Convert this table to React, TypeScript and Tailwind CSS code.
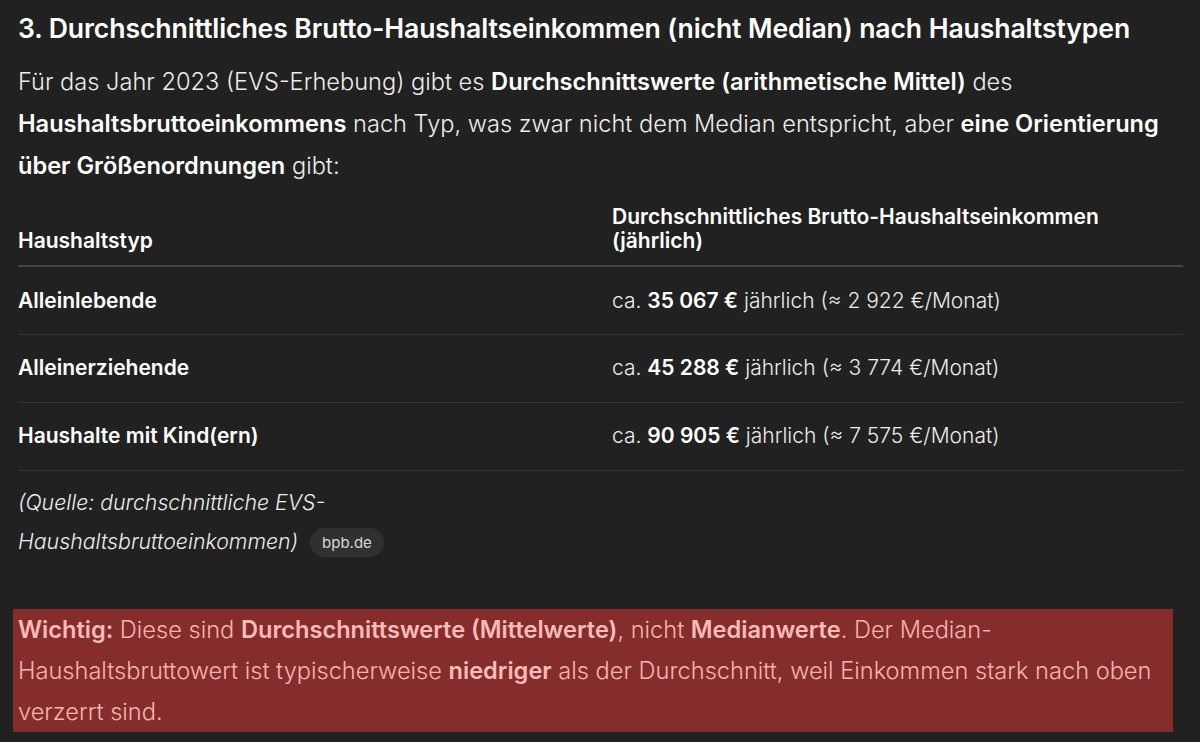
import React from "react";

const rows = [
  { t: "Alleinlebende", v: "35 067 €", m: "2 922" },
  { t: "Alleinerziehende", v: "45 288 €", m: "3 774" },
  { t: "Haushalte mit Kind(ern)", v: "90 905 €", m: "7 575" },
];

export default function App() {
  return (
    <div
      className="min-h-[742px] w-[1200px] bg-[#212121] text-[#ececec] overflow-hidden"
      style={{ fontFamily: "Inter, 'Noto Sans', sans-serif" }}
    >
      <div className="pl-[18px] pr-[17px] pt-[11px]">
        <h3 className="text-[26.6px] leading-[34px] font-semibold text-white tracking-[-0.1px]">
          3. Durchschnittliches Brutto-Haushaltseinkommen (nicht Median) nach Haushaltstypen
        </h3>
        <p className="mt-[16px] text-[23.6px] leading-[42px] font-light text-[#ececec]">
          Für das Jahr 2023 (EVS-Erhebung) gibt es{" "}
          <strong className="font-semibold text-white">Durchschnittswerte (arithmetische Mittel)</strong> des{" "}
          <strong className="font-semibold text-white">Haushaltsbruttoeinkommens</strong> nach Typ, was zwar nicht dem
          Median entspricht, aber <strong className="font-semibold text-white">eine Orientierung über Größenordnungen</strong>{" "}
          gibt:
        </p>

        <table className="mt-[18px] w-[1165px] border-collapse text-[21px]">
          <thead>
            <tr className="border-b-2 border-[#454545]">
              <th className="w-[594px] pb-[12px] text-left align-bottom font-semibold leading-[24px] text-white">
                Haushaltstyp
              </th>
              <th className="pb-[12px] text-left align-bottom font-semibold leading-[24px] text-white">
                Durchschnittliches Brutto-Haushaltseinkommen
                <br />
                (jährlich)
              </th>
            </tr>
          </thead>
          <tbody>
            {rows.map((r) => (
              <tr key={r.t} className="h-[68px] border-b border-[#353535]">
                <td className="align-middle font-semibold text-white">{r.t}</td>
                <td className="align-middle font-light text-[#ececec]">
                  ca. <strong className="font-semibold text-white">{r.v}</strong> jährlich (≈ {r.m} €/Monat)
                </td>
              </tr>
            ))}
          </tbody>
        </table>

        <p className="mt-[12px] text-[21.3px] leading-[39px] italic font-light text-[#ececec]">
          (Quelle: durchschnittliche EVS-
          <br />
          Haushaltsbruttoeinkommen){" "}
          <span className="ml-[6px] inline-flex h-[29px] items-center rounded-full bg-[#303030] px-[12px] align-middle text-[15px] not-italic font-normal leading-none text-[#d8d8d8]">
            bpb.de
          </span>
        </p>
      </div>

      <div className="ml-[13px] mt-[48px] w-[1160px] bg-[#852d2d] pl-[5px] pr-[5px] text-[23.6px] leading-[41px] font-light text-[#f6b4ad]">
        <strong className="font-semibold text-[#f9bcb5]">Wichtig:</strong> Diese sind{" "}
        <strong className="font-semibold text-[#f9bcb5]">Durchschnittswerte (Mittelwerte)</strong>, nicht{" "}
        <strong className="font-semibold text-[#f9bcb5]">Medianwerte</strong>. Der Median-Haushaltsbruttowert ist
        typischerweise <strong className="font-semibold text-[#f9bcb5]">niedriger</strong> als der Durchschnitt, weil
        Einkommen stark nach oben verzerrt sind.
      </div>
    </div>
  );
}
